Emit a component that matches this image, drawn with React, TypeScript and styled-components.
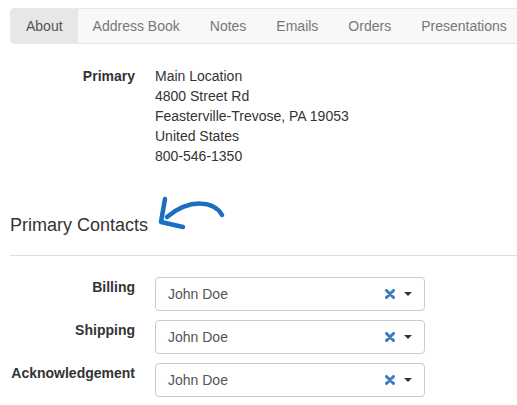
import React from 'react'
import styled, { createGlobalStyle } from 'styled-components'

const GlobalStyle = createGlobalStyle`
  body {
    margin: 0;
    background: #fff;
    font-family: 'Liberation Sans', Arial, sans-serif;
    font-size: 14px;
    color: #333;
  }
`

const tabs = ['About', 'Address Book', 'Notes', 'Emails', 'Orders', 'Presentations']

const contacts = ['Billing', 'Shipping', 'Acknowledgement']

const address = [
  'Main Location',
  '4800 Street Rd',
  'Feasterville-Trevose, PA 19053',
  'United States',
  '800-546-1350',
]

const App: React.FC = () => {
  return (
    <Page>
      <GlobalStyle />
      <TabBar>
        {tabs.map((t, i) => (
          <Tab key={t} active={i === 0}>
            {t}
          </Tab>
        ))}
      </TabBar>

      <DetailRow>
        <FieldLabel>Primary</FieldLabel>
        <Address>
          {address.map((line) => (
            <div key={line}>{line}</div>
          ))}
        </Address>
      </DetailRow>

      <HeadingRow>
        <Heading>Primary Contacts</Heading>
        {/* hand drawn annotation arrow */}
        <Arrow width="80" height="44" viewBox="0 0 80 44">
          <path
            d="M64 20 C 56 6, 32 3, 9 22"
            fill="none"
            stroke="#1b6ec2"
            strokeWidth="4.5"
            strokeLinecap="round"
          />
          <path
            d="M7 4 L 3 27 L 25 32"
            fill="none"
            stroke="#1b6ec2"
            strokeWidth="4.5"
            strokeLinecap="round"
            strokeLinejoin="round"
          />
        </Arrow>
      </HeadingRow>
      <Rule />

      <Form>
        {contacts.map((c) => (
          <FormRow key={c}>
            <FieldLabel>{c}</FieldLabel>
            <Select>
              <SelectValue>John Doe</SelectValue>
              <ClearIcon width="10" height="10" viewBox="0 0 10 10">
                <path d="M1.5 1.5 L8.5 8.5 M8.5 1.5 L1.5 8.5" stroke="#3a7bbf" strokeWidth="3" strokeLinecap="round" />
              </ClearIcon>
              <Caret />
            </Select>
          </FormRow>
        ))}
      </Form>
    </Page>
  )
}

const Page = styled.div`
  padding: 8px 0 0 10px;
  overflow: hidden;
  width: 517px;
  box-sizing: border-box;
`

const TabBar = styled.div`
  display: flex;
  height: 36px;
  margin-right: -20px;
  background: #f8f8f8;
  border: 1px solid #e7e7e7;
  border-radius: 4px;
  box-sizing: border-box;
  overflow: hidden;
`

const Tab = styled.div<{ active?: boolean }>`
  display: flex;
  align-items: center;
  padding: 0 15px;
  font-size: 14px;
  color: ${(props) => (props.active ? '#555' : '#777')};
  background: ${(props) => (props.active ? '#e7e7e7' : 'transparent')};
  white-space: nowrap;
`

const DetailRow = styled.div`
  display: grid;
  grid-template-columns: 125px 1fr;
  column-gap: 20px;
  margin-top: 22px;
  line-height: 20px;
`

const FieldLabel = styled.div`
  font-weight: bold;
  text-align: right;
  line-height: 20px;
  color: #333;
`

const Address = styled.div`
  color: #333;
`

const HeadingRow = styled.div`
  position: relative;
  margin-top: 49px;
`

const Heading = styled.h3`
  margin: 0;
  font-size: 18px;
  font-weight: normal;
  line-height: 20px;
  color: #333;
`

const Arrow = styled.svg`
  position: absolute;
  left: 148px;
  top: -20px;
`

const Rule = styled.hr`
  margin: 20px 0 0 0;
  border: 0;
  border-top: 1px solid #ddd;
`

const Form = styled.div`
  display: flex;
  flex-direction: column;
  gap: 9px;
  margin-top: 21px;
`

const FormRow = styled.div`
  display: grid;
  grid-template-columns: 125px 270px;
  column-gap: 20px;
  align-items: start;
`

const Select = styled.div`
  display: flex;
  align-items: center;
  height: 34px;
  padding: 0 12px;
  border: 1px solid #ccc;
  border-radius: 4px;
  box-sizing: border-box;
  background: #fff;
`

const SelectValue = styled.span`
  flex: 1;
  color: #555;
  font-size: 14px;
`

const ClearIcon = styled.svg`
  margin-right: 9px;
`

const Caret = styled.span`
  width: 0;
  height: 0;
  border-left: 4px solid transparent;
  border-right: 4px solid transparent;
  border-top: 4px solid #333;
`

export default App
